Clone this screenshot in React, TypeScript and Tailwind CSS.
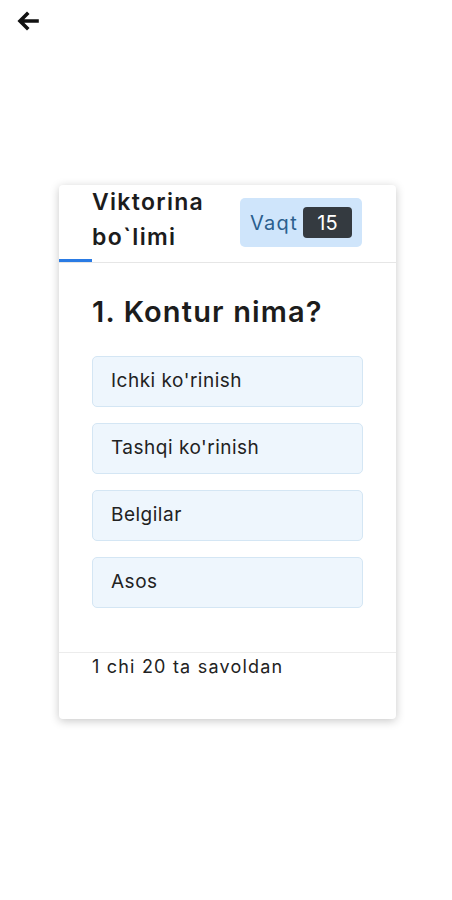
import React from "react";

const options = ["Ichki ko'rinish", "Tashqi ko'rinish", "Belgilar", "Asos"];

export default function App() {
  return (
    <div className="min-h-[900px] w-[452px] bg-white text-[#1c1c1c]" style={{ fontFamily: "Inter, 'Noto Sans', sans-serif" }}>
      <div className="h-[42px] pl-[16px] pt-[10px]">
        <svg width="24" height="22" viewBox="0 0 24 22" fill="none">
          <path d="M21 11H5M11 4L4 11L11 18" stroke="#111" strokeWidth="3.6" strokeLinecap="square" strokeLinejoin="miter" />
        </svg>
      </div>
      <div className="ml-[59px] mt-[143px] w-[337px] rounded-[4px] bg-white shadow-[0_2px_10px_rgba(0,0,0,0.22)]">
        <div className="flex flex-col border-b border-[#e6e6e6]">
          <div className="flex h-[74px] items-start justify-between pl-[33px] pr-[34px]">
            <div className="text-[23px] font-semibold leading-[35px] tracking-[1.3px]">
              Viktorina
              <br />
              bo`limi
            </div>
            <div className="mt-[13px] flex h-[49px] w-[122px] items-center rounded-[5px] bg-[#cfe5fb] pl-[10px]">
              <span className="text-[20px] tracking-[1.3px] text-[#2b5f8e]">Vaqt</span>
              <span className="ml-[5px] flex h-[31px] w-[49px] items-center justify-center rounded-[4px] bg-[#343a40] text-[20px] text-white">15</span>
            </div>
          </div>
          <div className="h-[3px] w-[33px] bg-[#2a7be4]" />
        </div>
        <div className="px-[33px] pt-[30px]">
          <div className="text-[29px] font-semibold leading-[38px] tracking-[1.15px]">1. Kontur nima?</div>
          <div className="mt-[25px] flex flex-col gap-[16px]">
            {options.map((o) => (
              <div key={o} className="flex h-[51px] w-[271px] items-center rounded-[5px] border border-[#d4e6f4] bg-[#eef6fd] pl-[18px] text-[19px] tracking-[0.5px] text-[#222]">
                {o}
              </div>
            ))}
          </div>
        </div>
        <div className="mt-[44px] border-t border-[#ececec] px-[33px] pb-[40px] pt-[1px] text-[18px] leading-[25px] tracking-[1.2px] text-[#222]">
          1 chi 20 ta savoldan
        </div>
      </div>
    </div>
  );
}
